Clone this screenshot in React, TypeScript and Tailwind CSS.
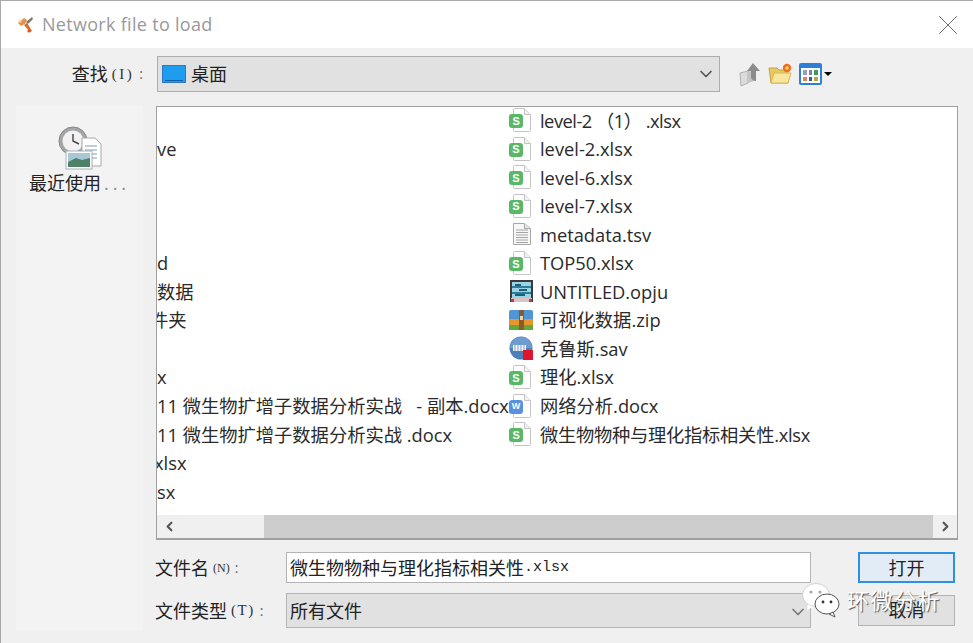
import React from 'react';
import { ChevronDown, ChevronLeft, ChevronRight, X } from 'lucide-react';

const cjk = "font-['Open_Sans','Noto_Sans_CJK_SC',sans-serif]";

const Page: React.FC<{ children?: React.ReactNode }> = ({ children }) => (
  <div className="relative w-[23px] h-[24px] shrink-0">
    <svg width="23" height="24" viewBox="0 0 23 24" className="absolute left-0 top-0">
      <path d="M5.5 .5h10l6 6v16a1 1 0 0 1-1 1h-15a1 1 0 0 1-1-1v-21a1 1 0 0 1 1-1z" fill="#fff" stroke="#c4c4c4" />
      <path d="M15.5 .5v6h6" fill="#f2f2f2" stroke="#c4c4c4" />
    </svg>
    {children}
  </div>
);

const SheetIcon = () => (
  <Page>
    <div className="absolute left-0 top-[6px] w-[14px] h-[14px] rounded-[3px] bg-[#58b868] flex items-center justify-center text-[11px] leading-none font-bold text-white font-['Liberation_Sans',sans-serif]">S</div>
  </Page>
);

const WordIcon = () => (
  <Page>
    <div className="absolute left-0 top-[6px] w-[14px] h-[14px] rounded-[3px] bg-[#5b8fe0] flex items-center justify-center text-[9px] leading-none font-bold text-white font-['Liberation_Sans',sans-serif]">W</div>
  </Page>
);

const TextIcon = () => (
  <svg width="23" height="24" viewBox="0 0 23 24" className="shrink-0">
    <path d="M4.5 1.5h11l6 5v16h-17z" fill="#f7f7f7" stroke="#a8a8a8" />
    <path d="M15.5 1.5v5h6" fill="#e4e4e4" stroke="#a8a8a8" />
    <path d="M7 8h12M7 10.500h12M7 13h12M7 15.500h12M7 18h12M7 20.500h12" stroke="#a4a4a4" />
  </svg>
);

const OriginIcon = () => (
  <svg width="25" height="23" viewBox="0 0 25 23" className="shrink-0">
    <rect x="1" y="0" width="23" height="22" fill="#3a3a3e" />
    <rect x="3" y="2" width="19" height="16" fill="#9ad4e4" />
    <path d="M3 7h19M3 13h19" stroke="#2c7f9c" strokeWidth="2" />
    <path d="M6 5h6M10 10h8M6 15h10" stroke="#1e5c78" strokeWidth="2" />
    <rect x="2" y="18" width="21" height="4" fill="#d8c4c4" />
    <rect x="2" y="19" width="3" height="3" fill="#d03040" />
    <rect x="20" y="19" width="3" height="3" fill="#d03040" />
  </svg>
);

const ZipIcon = () => (
  <svg width="24" height="20" viewBox="0 0 24 20" className="shrink-0">
    <path d="M0 2a2 2 0 0 1 2-2h20a2 2 0 0 1 2 2v7H0z" fill="#4f95d8" />
    <rect x="0" y="9" width="24" height="6" fill="#e8952c" />
    <rect x="0" y="15" width="24" height="5" fill="#62a83c" />
    <rect x="10" y="0" width="5" height="20" fill="#8a5a2c" />
    <rect x="11" y="6" width="3" height="4" fill="#e8d8a8" />
  </svg>
);

const SavIcon = () => (
  <svg width="25" height="25" viewBox="0 0 25 25" className="shrink-0">
    <circle cx="12" cy="12" r="11.5" fill="#4f7fb8" />
    <path d="M1 12a11 11 0 0 1 22 0z" fill="#6f9cd0" />
    <rect x="4" y="9" width="13" height="6" fill="#f2f4f8" />
    <path d="M6 9v6M9 9v6M12 9v6M15 9v6" stroke="#7f9cc4" />
    <rect x="14" y="14" width="10" height="10" fill="#e0152c" />
  </svg>
);

const leftRows: React.ReactNode[] = [
  '',
  've',
  '',
  '',
  '',
  'd',
  '数据',
  <span className="-ml-[7px]">件夹</span>,
  '',
  'x',
  '11 微生物扩增子数据分析实战   - 副本.docx',
  '11 微生物扩增子数据分析实战 .docx',
  <span className="-ml-[3px]">xlsx</span>,
  'sx',
];

const rightRows: { icon: React.ReactNode; name: string; fit?: string }[] = [
  { icon: <SheetIcon />, name: 'level-2 （1） .xlsx', fit: 'tracking-[-0.5px]' },
  { icon: <SheetIcon />, name: 'level-2.xlsx' },
  { icon: <SheetIcon />, name: 'level-6.xlsx' },
  { icon: <SheetIcon />, name: 'level-7.xlsx' },
  { icon: <TextIcon />, name: 'metadata.tsv' },
  { icon: <SheetIcon />, name: 'TOP50.xlsx' },
  { icon: <OriginIcon />, name: 'UNTITLED.opju' },
  { icon: <ZipIcon />, name: '可视化数据.zip' },
  { icon: <SavIcon />, name: '克鲁斯.sav' },
  { icon: <SheetIcon />, name: '理化.xlsx' },
  { icon: <WordIcon />, name: '网络分析.docx' },
  { icon: <SheetIcon />, name: '微生物物种与理化指标相关性.xlsx', fit: 'tracking-[-0.27px]' },
];

const Label: React.FC<{ text: string; hot: string; hotClass: string; className?: string }> = ({ text, hot, hotClass, className }) => (
  <div className={`flex items-center text-[18px] leading-none text-[#222] whitespace-pre ${className || ''}`}>
    {text}
    <span className={`ml-[4px] font-['Liberation_Serif','Noto_Sans_CJK_SC',serif] text-[#333] ${hotClass}`}>({hot})</span>
    <span className="text-[14px] ml-[5px] text-[#666]">:</span>
  </div>
);

const App: React.FC = () => (
  <div className={`relative w-[973px] h-[643px] overflow-hidden bg-[#f0f0f0] border-t border-l border-[#a8a8a8] flex flex-col ${cjk}`}>
    {/* title bar */}
    <div className="h-[47px] shrink-0 bg-white flex items-center pl-[15px] pr-[8px]">
      <svg width="20" height="20" viewBox="0 0 20 20" className="shrink-0">
        <path d="M2 8l6-5 3 2-2 4-4 2z" fill="#e89048" />
        <path d="M10 7l6-5 1 2-5 5z" fill="#7a7a70" />
        <path d="M8 10l6 7 2-1-5-8z" fill="#d86a28" />
        <circle cx="4" cy="6" r="1.6" fill="#f4d8b0" />
        <circle cx="13" cy="16" r="1.6" fill="#e85020" />
      </svg>
      <div className="ml-[6px] text-[18px] text-[#999] tracking-[0.3px]">Network file to load</div>
      <X size={34} strokeWidth={0.6} className="ml-auto text-[#555]" />
    </div>

    {/* look-in row */}
    <div className="flex items-center mt-[8px] h-[36px] shrink-0">
      <div className="w-[156px] flex justify-end pr-[14px]">
        <Label text="查找" hot="I" hotClass="text-[15px] tracking-[2.5px]" />
      </div>
      <div className="w-[563px] h-[36px] bg-[#e1e1e1] border border-[#adadad] flex items-center pl-[4px] pr-[3px]">
        <div className="w-[24px] h-[18px] bg-[#1e9cf0] border border-[#2a78c8] flex items-end justify-center shrink-0">
          <div className="w-[18px] h-[1px] bg-[#0f5fa8] mb-[1px]" />
        </div>
        <span className="ml-[5px] text-[18px] text-[#222]">桌面</span>
        <ChevronDown size={20} strokeWidth={2} className="ml-auto text-[#555]" />
      </div>
      <div className="flex items-center ml-[18px]">
        <svg width="24" height="26" viewBox="0 0 24 26">
          <path d="M2 12l8-2v12l-7 3z" fill="#dcdcdc" stroke="#b0b0b0" />
          <path d="M10 10l6 1v9l-6 2z" fill="#c4c4c4" />
          <path d="M15 2l7 8h-4v10c-3 0-5-2-5-4v-6h-4z" fill="#8c8c8c" />
        </svg>
        <svg width="26" height="24" viewBox="0 0 26 24" className="ml-[6px]">
          <path d="M1 6h8l2 2h9v13H3z" fill="#e8c860" stroke="#c8a448" />
          <path d="M3 21l3-10h17l-3 10z" fill="#f8e69c" stroke="#d8b858" />
          <circle cx="19" cy="6" r="4.2" fill="#f07020" />
          <circle cx="19" cy="6" r="1.8" fill="#fbd070" />
        </svg>
        <div className="ml-[5px] w-[23px] h-[22px] bg-white border-2 border-[#2f7fd8] rounded-[2px] border-t-[5px] grid grid-cols-3 gap-[2px] p-[2px]">
          <div className="bg-[#a09ac0]" /><div className="bg-[#8080a8]" /><div className="bg-[#3f9a58]" />
          <div className="bg-[#e08060]" /><div className="bg-[#2f5f9f]" /><div className="bg-[#b8a838]" />
        </div>
        <div className="ml-[2px] w-0 h-0 border-x-[4px] border-x-transparent border-t-[4px] border-t-black" />
      </div>
    </div>

    {/* body */}
    <div className="flex flex-1 min-h-0 mt-[14px] pb-[13px]">
      <div className="w-[127px] ml-[15px] shrink-0 bg-[#f3f3f3] flex flex-col items-center pt-[20px]">
        <svg width="46" height="44" viewBox="0 0 46 44">
          <circle cx="16" cy="15" r="14" fill="#a4a6aa" stroke="#85878c" />
          <circle cx="16" cy="15" r="10.5" fill="#f2f2f2" />
          <path d="M16 8v7l6 3" stroke="#444" strokeWidth="1.4" fill="none" />
          <path d="M25 12h13l6 6v22H25z" fill="#fff" stroke="#a8a8a8" />
          <path d="M28 20h12M28 24h12M28 28h12M28 32h12" stroke="#7f9ab8" />
          <rect x="9" y="25" width="26" height="18" fill="#fff" stroke="#a8b0b8" />
          <rect x="11" y="27" width="22" height="14" fill="#a8c8d8" />
          <path d="M11 36l8-4 6 2 8-2v9H11z" fill="#4f8068" />
        </svg>
        <div className="mt-[1px] text-[18px] leading-[24px] text-[#222] whitespace-nowrap">最近使用<span className="text-[#888] tracking-[4px] ml-[3px]">...</span></div>
      </div>

      <div className="ml-[13px] flex flex-col flex-1 min-w-0 pr-[15px]">
        <div className="h-[434px] shrink-0 bg-white border border-[#a0a0a0] border-b-2 flex flex-col">
          <div className="flex-1 min-h-0 flex overflow-hidden text-[18.3px] text-[#2a2a2a]">
            <div className="w-[352px] shrink-0 overflow-hidden -mt-[1px]">
              {leftRows.map((row, i) => (
                <div key={i} className="h-[28.55px] flex items-center whitespace-pre">{row}</div>
              ))}
            </div>
            <div className="flex-1 -mt-[1px]">
              {rightRows.map((row, i) => (
                <div key={i} className={`h-[28.55px] flex items-center whitespace-pre ${row.fit || ''}`}>
                  <div className="w-[31px] shrink-0 flex items-center">{row.icon}</div>
                  {row.name}
                </div>
              ))}
            </div>
          </div>
          <div className="h-[23px] shrink-0 bg-[#f0f0f0] flex items-stretch">
            <div className="w-[24px] flex items-center justify-center"><ChevronLeft size={15} strokeWidth={3.5} className="text-[#555]" /></div>
            <div className="w-[83px]" />
            <div className="flex-1 bg-[#cdcdcd]" />
            <div className="w-[24px] flex items-center justify-center"><ChevronRight size={15} strokeWidth={3.5} className="text-[#555]" /></div>
          </div>
        </div>

        <div className="grid grid-cols-[130px_525px_1fr] gap-y-[10px] items-center mt-[12px]">
          <Label text="文件名" hot="N" hotClass="text-[12px]" className="-ml-[1px]" />
          <div className="h-[31px] bg-white border border-[#b4b4b4] flex items-center pl-[3px] pr-[4px] pt-[1px] text-[18px] text-[#222] whitespace-pre overflow-hidden">
            微生物物种与理化指标相关性<span className="font-['Liberation_Mono',monospace] text-[15px]">.xlsx</span>
          </div>
          <div className="ml-[47px] w-[97px] h-[31px] bg-[#e1ecf7] border-2 border-[#2f8fe0] flex items-center justify-center pt-[1px] text-[18px] text-[#222]">打开</div>
          <Label text="文件类型" hot="T" hotClass="text-[15px] tracking-[1.5px]" className="-ml-[1px]" />
          <div className="h-[35px] bg-[#e1e1e1] border border-[#b4b4b4] flex items-center pl-[3px] pr-[2px] pt-[2px] text-[18px] text-[#222]">
            所有文件
            <ChevronDown size={20} strokeWidth={2} className="ml-auto text-[#777]" />
          </div>
          <div className="ml-[47px] w-[97px] h-[31px] bg-[#e1e1e1] border border-[#b4b4b4] flex items-center justify-center text-[18px] text-[#222]">取消</div>
        </div>
      </div>
    </div>

    {/* watermark overlay */}
    <div className="absolute left-[800px] top-[581px] flex items-center">
      <svg width="40" height="36" viewBox="0 0 40 36">
        <ellipse cx="15" cy="13" rx="13.5" ry="11.5" fill="#fff" stroke="#d0d0d0" />
        <path d="M7 22l-1 6 6-3z" fill="#fff" />
        <circle cx="10" cy="10" r="1.6" fill="#aaa" />
        <circle cx="19" cy="10" r="1.6" fill="#aaa" />
        <ellipse cx="26" cy="22" rx="12" ry="10" fill="#fff" stroke="#555" />
        <path d="M32 30l2 5-6-3z" fill="#fff" stroke="#555" />
        <circle cx="22" cy="20" r="1.4" fill="#333" />
        <circle cx="30" cy="20" r="1.4" fill="#333" />
      </svg>
      <span className="ml-[6px] text-[22px] text-white tracking-[1.5px] [text-shadow:1px_1px_1px_#555]">环微分析</span>
    </div>
  </div>
);

export default App;
